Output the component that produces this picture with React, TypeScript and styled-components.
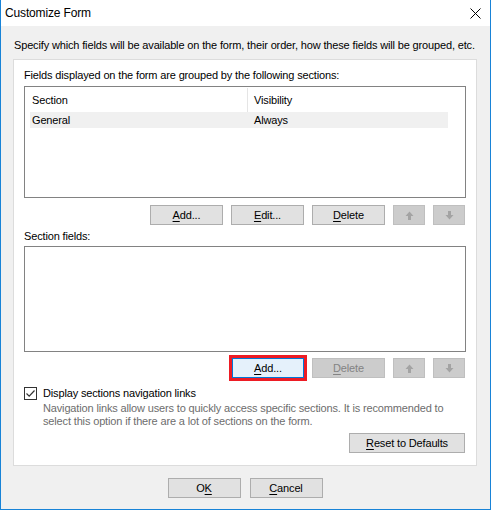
import React from 'react';
import styled, { createGlobalStyle } from 'styled-components';

const GlobalStyle = createGlobalStyle`
  html, body {
    margin: 0;
    padding: 0;
    background: #ffffff;
  }
  body {
    font-family: "Liberation Sans", Arial, sans-serif;
    font-size: 11px;
    letter-spacing: -0.15px;
    color: #000000;
  }
`;

/**
 * Dialog frame with the thin blue accent border.
 */
const Window = styled.div`
  box-sizing: border-box;
  width: 491px;
  height: 510px;
  border: 1px solid #1883d7;
  border-top: none;
  background: #f0f0f0;
  display: flex;
  flex-direction: column;
`;

const TitleBar = styled.div`
  height: 26px;
  background: #ffffff;
  display: flex;
  align-items: center;
  justify-content: space-between;
  padding: 0 9px 0 4px;
  flex-shrink: 0;
`;

const Title = styled.span`
  font-size: 12px;
  line-height: 15px;
`;

const Body = styled.div`
  display: flex;
  flex-direction: column;
  padding: 12px 13px 0 12px;
`;

const Intro = styled.div`
  line-height: 15px;
  margin-bottom: 6px;
  padding-left: 1px;
  white-space: nowrap;
`;

const Panel = styled.div`
  box-sizing: border-box;
  height: 407px;
  background: #ffffff;
  border: 1px solid #dcdcdc;
  padding: 8px 10px 0 10px;
  display: flex;
  flex-direction: column;
`;

const Caption = styled.div<{ $top?: number }>`
  line-height: 15px;
  margin-top: ${(p) => p.$top ?? 0}px;
`;

const ListBox = styled.div<{ $height: number; $top: number }>`
  box-sizing: border-box;
  height: ${(p) => p.$height}px;
  margin-top: ${(p) => p.$top}px;
  border: 1px solid #828282;
  background: #ffffff;
  padding: 1px 17px 0 5px;
`;

const Grid = styled.div`
  display: grid;
  grid-template-columns: 217px 1fr;
`;

const HeadCell = styled.div<{ $first?: boolean }>`
  height: 24px;
  line-height: 24px;
  padding-left: ${(p) => (p.$first ? 2 : 6)}px;
  border-left: ${(p) => (p.$first ? 'none' : '1px solid #e5e5e5')};
`;

const Cell = styled.div<{ $first?: boolean }>`
  height: 16px;
  line-height: 16px;
  background: #f0f0f0;
  padding-left: ${(p) => (p.$first ? 2 : 7)}px;
`;

const ButtonRow = styled.div<{ $top: number }>`
  display: flex;
  justify-content: flex-end;
  gap: 8px;
  margin-top: ${(p) => p.$top}px;
  padding-right: 1px;
`;

const Button = styled.button<{ $width?: number; $focus?: boolean }>`
  box-sizing: border-box;
  width: ${(p) => p.$width ?? 73}px;
  height: 20px;
  padding: 0;
  font-family: inherit;
  font-size: 11px;
  letter-spacing: inherit;
  line-height: 18px;
  color: #000000;
  background: ${(p) => (p.$focus ? '#e5f1fb' : '#e1e1e1')};
  border: 1px solid ${(p) => (p.$focus ? '#0078d7' : '#adadad')};
  outline: ${(p) => (p.$focus ? '3px solid #ed1c24' : 'none')};
  display: flex;
  align-items: center;
  justify-content: center;

  &:disabled {
    background: #cccccc;
    border-color: #bfbfbf;
    color: #838383;
  }
`;

const Key = styled.span`
  text-decoration: underline;
  text-underline-offset: 2px;
`;

const CheckRow = styled.label`
  display: flex;
  align-items: center;
  gap: 6px;
  margin-top: 8px;
  line-height: 15px;
`;

const Box = styled.span`
  box-sizing: border-box;
  width: 13px;
  height: 13px;
  border: 1px solid #333333;
  display: flex;
  align-items: center;
  justify-content: center;
`;

const Description = styled.div`
  color: #6d6d6d;
  line-height: 13px;
  padding-left: 19px;
  margin-top: 1px;
`;

const Footer = styled.div`
  display: flex;
  justify-content: center;
  gap: 9px;
  margin-top: 12px;
`;

const CloseIcon = () => (
  <svg width="11" height="11" viewBox="0 0 11 11">
    <path d="M0.5 0.5 L10.5 10.5 M10.5 0.5 L0.5 10.5" stroke="#000" strokeWidth="1" />
  </svg>
);

const ArrowIcon: React.FC<{ down?: boolean }> = ({ down }) => (
  <svg width="9" height="9" viewBox="0 0 9 9">
    <path
      d={down ? 'M3 0 H6 V4 H8.5 L4.5 8.5 L0.5 4 H3 Z' : 'M4.5 0.5 L8.5 5 H6 V9 H3 V5 H0.5 Z'}
      fill="#a3a3a3"
    />
  </svg>
);

const CheckMark = () => (
  <svg width="11" height="11" viewBox="0 0 11 11">
    <path d="M1.5 5.5 L4.2 8.2 L9.5 2.5" stroke="#333" strokeWidth="1.2" fill="none" />
  </svg>
);

/**
 * Customize Form dialog.
 */
const App: React.FC = () => {
  return (
    <>
      <GlobalStyle />
      <Window>
        <TitleBar>
          <Title>Customize Form</Title>
          <CloseIcon />
        </TitleBar>
        <Body>
          <Intro>
            Specify which fields will be available on the form, their order, how these fields will be grouped, etc.
          </Intro>
          <Panel>
            <Caption>Fields displayed on the form are grouped by the following sections:</Caption>
            <ListBox $height={112} $top={3}>
              <Grid>
                <HeadCell $first>Section</HeadCell>
                <HeadCell>Visibility</HeadCell>
                <Cell $first>General</Cell>
                <Cell>Always</Cell>
              </Grid>
            </ListBox>
            <ButtonRow $top={7}>
              <Button>
                <Key>A</Key>dd...
              </Button>
              <Button>
                <Key>E</Key>dit...
              </Button>
              <Button>
                <Key>D</Key>elete
              </Button>
              <Button $width={32} disabled>
                <ArrowIcon />
              </Button>
              <Button $width={32} disabled>
                <ArrowIcon down />
              </Button>
            </ButtonRow>
            <Caption $top={4}>Section fields:</Caption>
            <ListBox $height={106} $top={2} />
            <ButtonRow $top={6}>
              <Button $width={72} $focus>
                <Key>A</Key>dd...
              </Button>
              <Button disabled>
                <Key>D</Key>elete
              </Button>
              <Button $width={32} disabled>
                <ArrowIcon />
              </Button>
              <Button $width={32} disabled>
                <ArrowIcon down />
              </Button>
            </ButtonRow>
            <CheckRow>
              <Box>
                <CheckMark />
              </Box>
              Display sections navigation links
            </CheckRow>
            <Description>
              Navigation links allow users to quickly access specific sections. It is recommended to
              <br />
              select this option if there are a lot of sections on the form.
            </Description>
            <ButtonRow $top={5}>
              <Button $width={116}>
                <Key>R</Key>eset to Defaults
              </Button>
            </ButtonRow>
          </Panel>
          <Footer>
            <Button>
              O<Key>K</Key>
            </Button>
            <Button>
              <Key>C</Key>ancel
            </Button>
          </Footer>
        </Body>
      </Window>
    </>
  );
};

export default App;
